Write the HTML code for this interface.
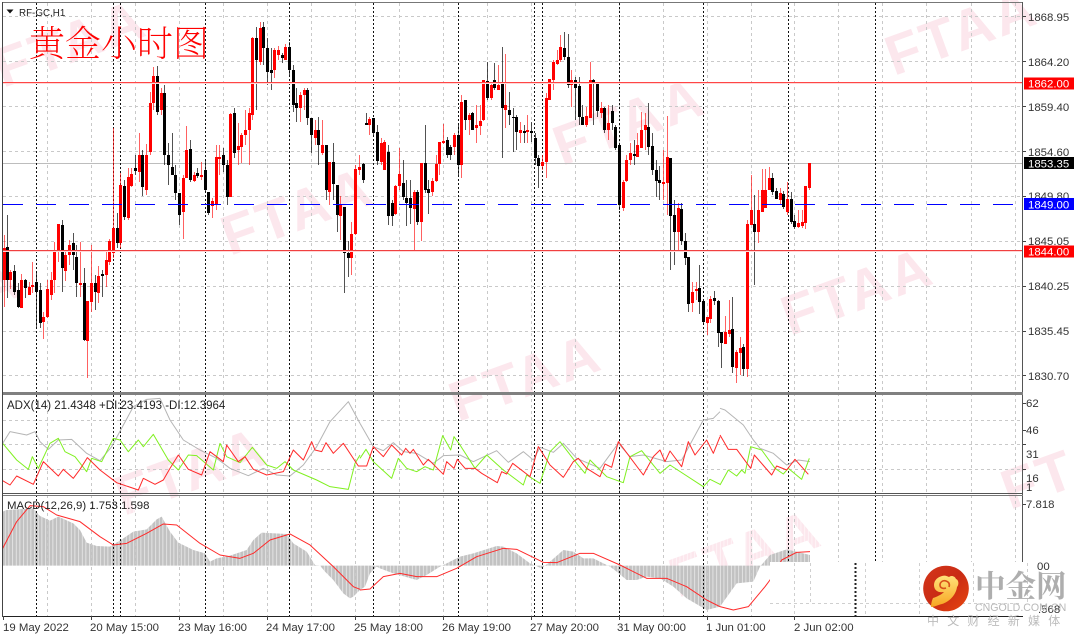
<!DOCTYPE html>
<html lang="zh"><head><meta charset="utf-8"><title>RF-GC,H1</title>
<style>
html,body{margin:0;padding:0;background:#fff;width:1080px;height:638px;overflow:hidden}
svg{display:block;filter:blur(.3px)}
text{font-family:"Liberation Sans","Noto Sans CJK SC",sans-serif;fill:#333;font-size:11.4px}
.w{font-family:"Liberation Sans",sans-serif;font-weight:700;font-size:56px;fill:#fce7ed;letter-spacing:3px}
</style></head><body>
<svg width="1080" height="638" viewBox="0 0 1080 638" xmlns="http://www.w3.org/2000/svg">
<defs>
<pattern id="st" patternUnits="userSpaceOnUse" width="3.667" height="10" x="1.2" y="0"><rect x="0" y="0" width=".7" height="10" fill="#fff" fill-opacity=".75"/></pattern>
<linearGradient id="lg" x1="0" y1="0" x2="1" y2="1"><stop offset="0" stop-color="#d4351a"/><stop offset=".5" stop-color="#c92c14"/><stop offset="1" stop-color="#e8470f"/></linearGradient>
<linearGradient id="ly" x1="0" y1="0" x2="0" y2="1"><stop offset="0" stop-color="#ffe27a"/><stop offset="1" stop-color="#f7a521"/></linearGradient>
</defs>
<rect width="1080" height="638" fill="#fff"/>

<!-- watermarks -->
<g class="wm">
<text class="w" transform="translate(3,88) rotate(-20)">FTAA</text>
<text class="w" transform="translate(894,76) rotate(-20)">FTAA</text>
<text class="w" transform="translate(562,166) rotate(-20)">FTAA</text>
<text class="w" transform="translate(230,256) rotate(-20)">FTAA</text>
<text class="w" transform="translate(790,336) rotate(-20)">FTAA</text>
<text class="w" transform="translate(458,422) rotate(-20)">FTAA</text>
<text class="w" transform="translate(-122,348) rotate(-20)">FTAA</text>
<text class="w" transform="translate(124,516) rotate(-20)">FTAA</text>
<text class="w" transform="translate(678,598) rotate(-20)">FTAA</text>
<text class="w" transform="translate(1010,510) rotate(-20)">FT</text>
</g>

<!-- MACD histogram -->
<g fill="#c2c2c2">
<polygon transform="translate(0,390) scale(.33333)" points="8,527 8,365 20,360 100,355 120,378 150,392 175,380 220,400 240,420 260,458 290,468 330,470 370,445 400,425 440,418 470,388 485,380 510,425 535,458 580,480 615,490 630,515 650,505 690,497 740,480 760,450 785,428 860,432 880,460 920,485 945,525 960,527 975,545 1000,570 1030,610 1050,625 1060,620 1080,600 1080,527"/>
<polygon transform="translate(360,390) scale(.33333)" points="0,527 0,600 15,590 30,550 50,530 60,535 100,550 170,570 200,555 240,530 260,520 300,500 340,490 410,468 430,470 470,490 510,520 545,535 570,515 610,480 640,485 670,505 700,505 750,530 770,545 800,570 830,570 860,560 900,565 940,590 980,625 1040,660 1080,650 1080,527"/>
<polygon transform="translate(720,390) scale(.33333)" points="0,527 0,650 50,580 100,575 120,530 150,495 200,478 270,495 270,527"/>
</g>
<rect x="3" y="498" width="820" height="118" fill="url(#st)"/>

<!-- grid -->
<g stroke="#c9c9c9" stroke-width="1" stroke-dasharray="3 3" fill="none">
<path d="M3 16.5H1023M3 61.5H1023M3 106.5H1023M3 151.5H1023M3 196.5H1023M3 241.5H1023M3 286.5H1023M3 331.5H1023M3 375.5H1023M3 420.5H1023M3 444.5H1023M3 469.5H1023"/>
<path d="M47.5 3V616M91.5 3V616M135.5 3V616M179.5 3V616M223.5 3V616M267.5 3V616M311.5 3V616M355.5 3V616M399.5 3V616M443.5 3V616M487.5 3V616M531.5 3V616M575.5 3V616M619.5 3V616M663.5 3V616M707.5 3V616M751.5 3V616M794.5 3V616M838.5 3V616M882.5 3V616M926.5 3V616M971.5 3V616M1015.5 3V616"/>
</g>
<path d="M3 163.5H1023" stroke="#bdbdbd" stroke-width="1"/>
<g stroke="#111" stroke-width="1" stroke-dasharray="2 2" fill="none">
<path d="M36.5 3V616M113.5 3V616M120.5 3V616M205.5 3V616M289.5 3V616M373.5 3V616M458.5 3V616M534.5 3V616M542.5 3V616M619.5 3V616M703.5 3V616M788.5 3V616M875.5 3V616"/>
</g>

<!-- candles -->
<g transform="translate(.5,0)" fill="none">
<path stroke="#ff0000" stroke-opacity=".62" stroke-width="1" d="M4 235V307M10 270V289M21 274V308M29 282V295M32 262V293M43 312V339M47 280V318M51 272V300M54 242V293M58 224V262M65 250V281M69 240V265M80 242V297M87 301V378M91 245V312M98 266V303M106 250V287M109 239V265M113 128V258M120 173V248M128 168V220M131 168V187M139 133V182M146 144V195M150 92V155M153 67V110M161 88V115M183 175V239M186 126V178M194 172V182M201 162V180M212 198V218M216 145V210M219 145V175M230 113V197M238 123V165M241 133V163M245 110V145M249 108V165M252 37V120M260 22V65M274 48V78M278 46V60M285 44V60M300 92V122M304 88V110M315 120V145M322 120V155M329 162V205M340 196V240M351 222V275M355 165V235M359 155V175M369 117V135M381 138V165M384 140V170M395 185V215M399 148V190M414 190V251M421 163V241M432 178V196M436 155V182M439 142V175M443 124V144M454 133V155M461 95V178M469 113V135M476 105V143M480 105V135M483 80V121M491 82V100M498 65V90M505 54V128M520 122V143M527 115V143M542 155V170M546 93V178M549 79V100M553 60V90M557 50V65M560 35V62M571 70V107M586 107V127M590 62V118M601 102V118M608 105V140M623 180V211M626 155V182M630 143V165M637 133V157M641 112V148M645 113V150M663 150V200M667 116V215M678 203V250M692 282V312M696 282V300M707 317V335M710 296V323M725 316V344M729 300V337M736 350V383M740 337V375M747 220V377M751 175V225M758 190V243M762 169V212M765 169V208M769 167V190M780 188V205M787 182V215M798 210V228M802 210V228M805 186V229M809 163V190"/>
<path stroke="#000" stroke-opacity=".68" stroke-width="1" d="M7 215V298M14 265V295M18 283V308M25 279V298M36 272V327M40 283V328M62 220V292M73 233V270M76 245V297M84 268V341M95 275V310M102 270V297M117 213V248M124 180V220M135 155V175M142 150V196M157 66V115M164 85V165M168 143V185M172 133V175M175 165V200M179 193V225M190 140V182M197 168V178M205 160V192M208 192V215M223 148V172M227 160V205M234 108V158M256 27V110M263 22V65M267 38V85M271 48V90M282 53V63M289 42V75M293 65V112M296 88V122M307 88V125M311 118V153M318 117V165M326 145V200M333 143V200M337 185V232M344 207V293M348 241V277M363 163V183M366 113V125M373 118V135M377 125V165M388 145V225M392 200V226M403 160V200M406 180V226M410 180V224M417 190V225M425 125V193M428 180V214M447 137V158M450 145V160M458 125V175M465 100V130M472 112V130M487 62V100M494 63V90M502 47V158M509 92V125M513 108V152M516 115V150M524 125V143M531 122V142M535 133V165M538 155V188M564 32V60M568 34V88M575 77V120M579 77V125M582 105V125M593 79V125M597 83V117M604 107V133M612 105V130M615 125V150M619 145V210M634 140V165M648 103V155M652 133V175M656 160V197M659 166V200M670 158V270M674 200V265M681 203V245M685 233V265M688 257V312M699 265V314M703 301V325M714 291V305M718 300V347M721 332V368M732 297V373M743 344V376M754 195V285M772 173V195M776 188V199M783 191V209M791 192V224M794 215V229"/>
<path stroke="#ff0000" stroke-width="3" d="M4 248V280M10 272V280M21 280V308M29 287V295M32 285V287M43 317V322M47 289V317M51 280V295M54 252V280M58 224V252M65 255V271M69 245V255M80 283V285M87 301V341M91 283V302M98 276V293M106 260V275M109 241V262M113 228V253M120 185V243M128 177V218M131 174V186M139 155V172M146 155V190M150 103V152M153 76V103M161 93V110M183 178V212M186 150V178M194 175V181M201 175V177M212 201V206M216 157V205M219 157V159M230 114V197M238 146V150M241 135V147M245 130V135M249 113V130M252 38V115M260 28V62M274 50V70M278 50V55M285 47V60M300 95V108M304 90V95M315 130V138M322 145V153M329 162V192M340 205V216M351 234V258M355 169V234M359 167V170M369 119V125M381 143V162M384 142V170M395 186V214M399 174V186M414 192V209M421 163V222M432 181V192M436 164V181M439 142V164M443 141V143M454 135V147M461 102V165M469 115V120M476 125V128M480 121V126M483 80V120M491 85V98M498 85V90M505 105V110M520 130V133M527 130V132M542 162V166M546 98V162M549 79V100M553 62V80M557 60V64M560 47V60M571 80V85M586 116V125M590 80V118M601 108V113M608 123V130M623 182V208M626 160V181M630 153V160M637 145V157M641 130V148M645 125V130M663 182V184M667 157V183M678 208V232M692 292V303M696 289V291M707 317V323M710 299V319M725 332V344M729 330V334M736 352V368M740 348V353M747 224V369M751 210V225M758 210V232M762 190V212M765 190V208M769 178V190M780 193V200M787 199V212M798 223V227M802 222V226M805 186V223M809 163V188"/>
<path stroke="#000" stroke-width="3" d="M7 247V280M14 271V292M18 290V307M25 280V288M36 282V292M40 290V323M62 225V268M73 243V255M76 257V283M84 283V340M95 283V292M102 274V276M117 228V243M124 186V217M135 168V171M142 155V187M157 76V112M164 93V155M168 155V165M172 167V175M175 175V193M179 193V215M190 149V180M197 173V176M205 170V190M208 192V213M223 155V165M227 165V197M234 113V153M256 38V60M263 27V48M267 48V72M271 70V73M282 55V58M289 47V70M293 70V105M296 103V108M307 90V118M311 118V135M318 130V145M326 145V190M333 162V184M337 185V215M344 207V253M348 253V258M363 164V180M366 123V125M373 118V133M377 132V161M388 152V216M392 203V216M403 183V197M406 198V203M410 198V208M417 192V222M425 163V190M428 189V193M447 140V155M450 147V155M458 135V165M465 100V120M472 113V130M487 81V98M494 80V88M502 83V108M509 110V115M513 117V118M516 117V132M524 131V133M531 131V133M535 138V158M538 158V166M564 48V57M568 57V85M575 80V88M579 86V117M582 117V125M593 80V84M597 83V111M604 108V130M612 111V123M615 127V148M619 145V205M634 154V156M648 127V147M652 146V170M656 170V181M659 180V183M670 158V216M674 215V232M681 209V241M685 241V258M688 257V304M699 288V302M703 301V322M714 298V301M718 301V333M721 332V343M732 329V367M743 347V369M754 224V232M772 178V192M776 191V199M783 194V207M791 199V222M794 221V227"/>
</g>

<!-- level lines -->
<path d="M3 83.5H1023" stroke="#ffd6d6" stroke-width="1"/>
<path d="M3 82.5H1023" stroke="#ff4545" stroke-width="1"/>
<path d="M3 251.5H1023" stroke="#ffd6d6" stroke-width="1"/>
<path d="M3 250.5H1023" stroke="#f04040" stroke-width="1"/>
<path d="M3 204.5H1023" stroke="#0000ff" stroke-width="1" stroke-dasharray="20 13"/>

<!-- ADX lines -->
<g fill="none" stroke-width="3" stroke-linejoin="round">
<g transform="translate(0,390) scale(.33333)">
<polyline stroke="#b5b5b5" points="8,160 30,125 80,135 105,125 120,155 145,178 175,150 215,148 260,190 300,212 335,170 400,50 440,28 480,25 510,90 550,150 600,180 650,205 690,235 745,257 790,235 830,255 870,258 910,225 950,170 990,95 1045,35 1080,100"/>
<polyline stroke="#80f020" points="8,160 50,210 85,238 97,200 115,235 150,160 175,145 195,185 225,200 260,245 275,205 305,215 340,145 360,150 385,185 415,150 430,170 460,133 505,210 535,240 565,195 590,197 640,240 660,160 680,200 720,218 757,172 800,225 830,235 855,215 880,240 950,270 990,290 1045,298 1065,220 1080,195"/>
<polyline stroke="#ff2a2a" points="8,272 30,285 50,258 100,283 130,215 175,258 190,238 220,265 240,238 262,203 300,240 350,278 415,300 430,265 465,283 490,270 510,235 535,195 565,238 605,255 630,185 670,215 680,165 715,215 735,200 760,238 800,255 850,245 880,180 910,210 935,155 945,180 965,185 978,158 1000,190 1030,160 1075,228 1080,228"/>
</g>
<g transform="translate(360,390) scale(.33333)">
<polyline stroke="#b5b5b5" points="0,100 40,170 70,182 100,158 130,185 170,190 220,220 250,197 300,195 340,215 410,182 445,217 490,185 520,210 540,172 580,187 610,160 650,205 720,235 775,160 810,200 850,195 920,215 965,210 1030,90 1060,85 1080,65"/>
<polyline stroke="#80f020" points="0,205 18,178 40,215 95,265 115,205 140,235 170,245 195,230 220,240 248,137 272,180 282,140 300,165 345,235 380,195 430,240 490,285 500,255 540,280 570,185 600,155 650,220 675,250 690,210 740,260 790,278 810,200 845,182 900,250 930,225 1030,290 1050,268 1080,283"/>
<polyline stroke="#ff2a2a" points="0,228 20,228 40,170 70,200 95,165 125,195 137,175 150,190 160,178 190,225 205,208 250,253 260,215 282,235 292,208 315,235 345,235 365,250 412,278 425,245 440,252 458,220 510,260 535,170 570,225 610,262 640,215 655,205 680,235 720,260 735,222 755,232 775,155 850,255 880,200 900,180 915,215 930,183 965,230 985,155 1005,195 1040,150 1060,190 1080,140"/>
</g>
<g transform="translate(720,390) scale(.33333)">
<polyline stroke="#b5b5b5" points="0,55 15,60 70,105 100,150 120,175 160,190 200,225 235,210 270,215"/>
<polyline stroke="#80f020" points="0,285 25,240 50,258 65,240 75,250 92,170 125,180 165,235 190,252 205,235 245,268 268,205"/>
<polyline stroke="#ff2a2a" points="0,135 25,178 50,178 92,235 103,195 155,255 170,228 200,240 225,208 265,253"/>
</g>
<!-- MACD signal -->
<g transform="translate(0,390) scale(.33333)"><polyline stroke="#ff2a2a" points="8,475 50,395 90,347 130,350 170,375 240,395 300,440 340,465 380,460 440,430 490,402 530,405 600,460 660,495 720,505 760,490 810,450 870,432 930,465 1000,530 1060,590 1080,598"/></g>
<g transform="translate(360,390) scale(.33333)"><polyline stroke="#ff2a2a" points="0,600 30,597 70,560 120,550 170,560 230,560 290,535 350,500 430,475 470,478 550,517 590,518 660,490 700,490 780,525 860,565 920,565 980,590 1040,630 1080,650"/></g>
<g transform="translate(720,390) scale(.33333)"><polyline stroke="#ff2a2a" points="0,650 40,660 85,650 135,590 150,570 185,510 230,487 270,485"/></g>
</g>

<!-- frame -->
<path d="M3 2.5H1023" stroke="#777" stroke-width="1"/>
<path d="M2.5 2V617" stroke="#444" stroke-width="1"/>
<path d="M1022.5 2V562" stroke="#555" stroke-width="1"/>
<path d="M3 393.5H1023" stroke="#808080" stroke-width="3"/>
<path d="M3 493.5H1023" stroke="#555" stroke-width="1"/>
<path d="M3 495.5H1023" stroke="#777" stroke-width="1"/>

<!-- white logo overlay -->
<rect x="770" y="562" width="266" height="54" fill="#fff"/>
<g stroke="#cfcfcf" stroke-width="1" stroke-dasharray="3 3" fill="none">
<path d="M770 603.5H1022M794.5 563V616M810.5 563V603M865.5 563V616M919.5 563V616M973.5 563V604M1027.5 563V604"/>
</g>
<path d="M855.5 563V616" stroke="#222" stroke-width="2" stroke-dasharray="2 2" fill="none"/>
<path d="M3 616.5H1023" stroke="#222" stroke-width="1"/>

<!-- right axis ticks -->
<path stroke="#444" stroke-width="1" d="M1023 16.5h3M1023 61.5h3M1023 106.5h3M1023 151.5h3M1023 196.5h3M1023 241.5h3M1023 286.5h3M1023 331.5h3M1023 375.5h3M1023 403.5h3M1023 430.5h3M1023 444.5h3M1023 469.5h3M1023 504.5h3M3.5 616v4M91.5 616v4M179.5 616v4M267.5 616v4M355.5 616v4M443.5 616v4M531.5 616v4M619.5 616v4M707.5 616v4M794.5 616v4"/>

<!-- right axis labels -->
<g>
<text x="1028" y="21">1868.95</text>
<text x="1028" y="66">1864.20</text>
<text x="1028" y="111">1859.40</text>
<text x="1028" y="156">1854.60</text>
<text x="1028" y="200">1849.80</text>
<text x="1028" y="245">1845.05</text>
<text x="1028" y="290">1840.25</text>
<text x="1028" y="335">1835.45</text>
<text x="1028" y="380">1830.70</text>
<text x="1026" y="407">62</text>
<text x="1026" y="434">46</text>
<text x="1026" y="458">31</text>
<text x="1026" y="482">16</text>
<text x="1026" y="491">1</text>
<text x="1026" y="508">7.818</text>
<text x="1037" y="570">00</text>
<text x="1038" y="613">.568</text>
</g>
<rect x="1024" y="77.5" width="50" height="12" fill="#ff0000"/>
<text x="1028" y="87.5" style="fill:#fff">1862.00</text>
<rect x="1024" y="157" width="50" height="12" fill="#000"/>
<text x="1028" y="167.5" style="fill:#fff">1853.35</text>
<rect x="1024" y="198" width="50" height="12" fill="#0000ff"/>
<text x="1028" y="208.5" style="fill:#fff">1849.00</text>
<rect x="1024" y="245.5" width="50" height="12" fill="#ff0000"/>
<text x="1028" y="255.5" style="fill:#fff">1844.00</text>

<!-- bottom labels -->
<g>
<text x="3" y="631">19 May 2022</text>
<text x="90" y="631">20 May 15:00</text>
<text x="178" y="631">23 May 16:00</text>
<text x="266" y="631">24 May 17:00</text>
<text x="354" y="631">25 May 18:00</text>
<text x="442" y="631">26 May 19:00</text>
<text x="530" y="631">27 May 20:00</text>
<text x="617" y="631">31 May 00:00</text>
<text x="706" y="631">1 Jun 01:00</text>
<text x="794" y="631">2 Jun 02:00</text>
</g>

<!-- titles -->
<polygon points="6.5,9.5 13.5,9.5 10,13.5" fill="#111"/>
<text x="19" y="16" style="font-size:9.8px;fill:#222">RF-GC,H1</text>
<text x="29" y="56" style="font-family:'Liberation Serif','Noto Serif CJK SC',serif;font-size:36px;fill:#f00;font-weight:200">黄金小时图</text>
<text x="7" y="409" style="font-size:11.5px;fill:#222">ADX(14) 21.4348 +DI:23.4193 -DI:12.3964</text>
<text x="7" y="509" style="font-size:11.4px;fill:#222">MACD(12,26,9) 1.753 1.598</text>

<!-- logo -->
<circle cx="946" cy="588.5" r="22.8" fill="url(#lg)"/>
<path d="M933 598c3-1 8-3 11-6-5 1-10-1-10-7 0-5 4-8 8-9 3-1 5 0 7 1 2-2 6-1 7 2 3 1 3 6 1 8-1 8-8 15-15 17-4 1-8 3-11 3 0-3 1-7 2-9z" fill="url(#ly)"/>
<path d="M946 588c-3 1-6 0-6-3s3-5 6-4 4 3 3 6" fill="none" stroke="#d8501a" stroke-width="1.6"/>
<text x="975" y="597" style="font-family:'Noto Serif CJK SC',serif;font-size:30.5px;font-weight:700;fill:#aeaeae">中金网</text>
<text x="975" y="611" style="font-size:10.6px;fill:#b8b8b8">CNGOLD.COM.CN</text>
<text x="927" y="625" style="font-size:12px;fill:#bcbcbc;letter-spacing:8.2px">中文财经新媒体</text>
</svg>
</body></html>
